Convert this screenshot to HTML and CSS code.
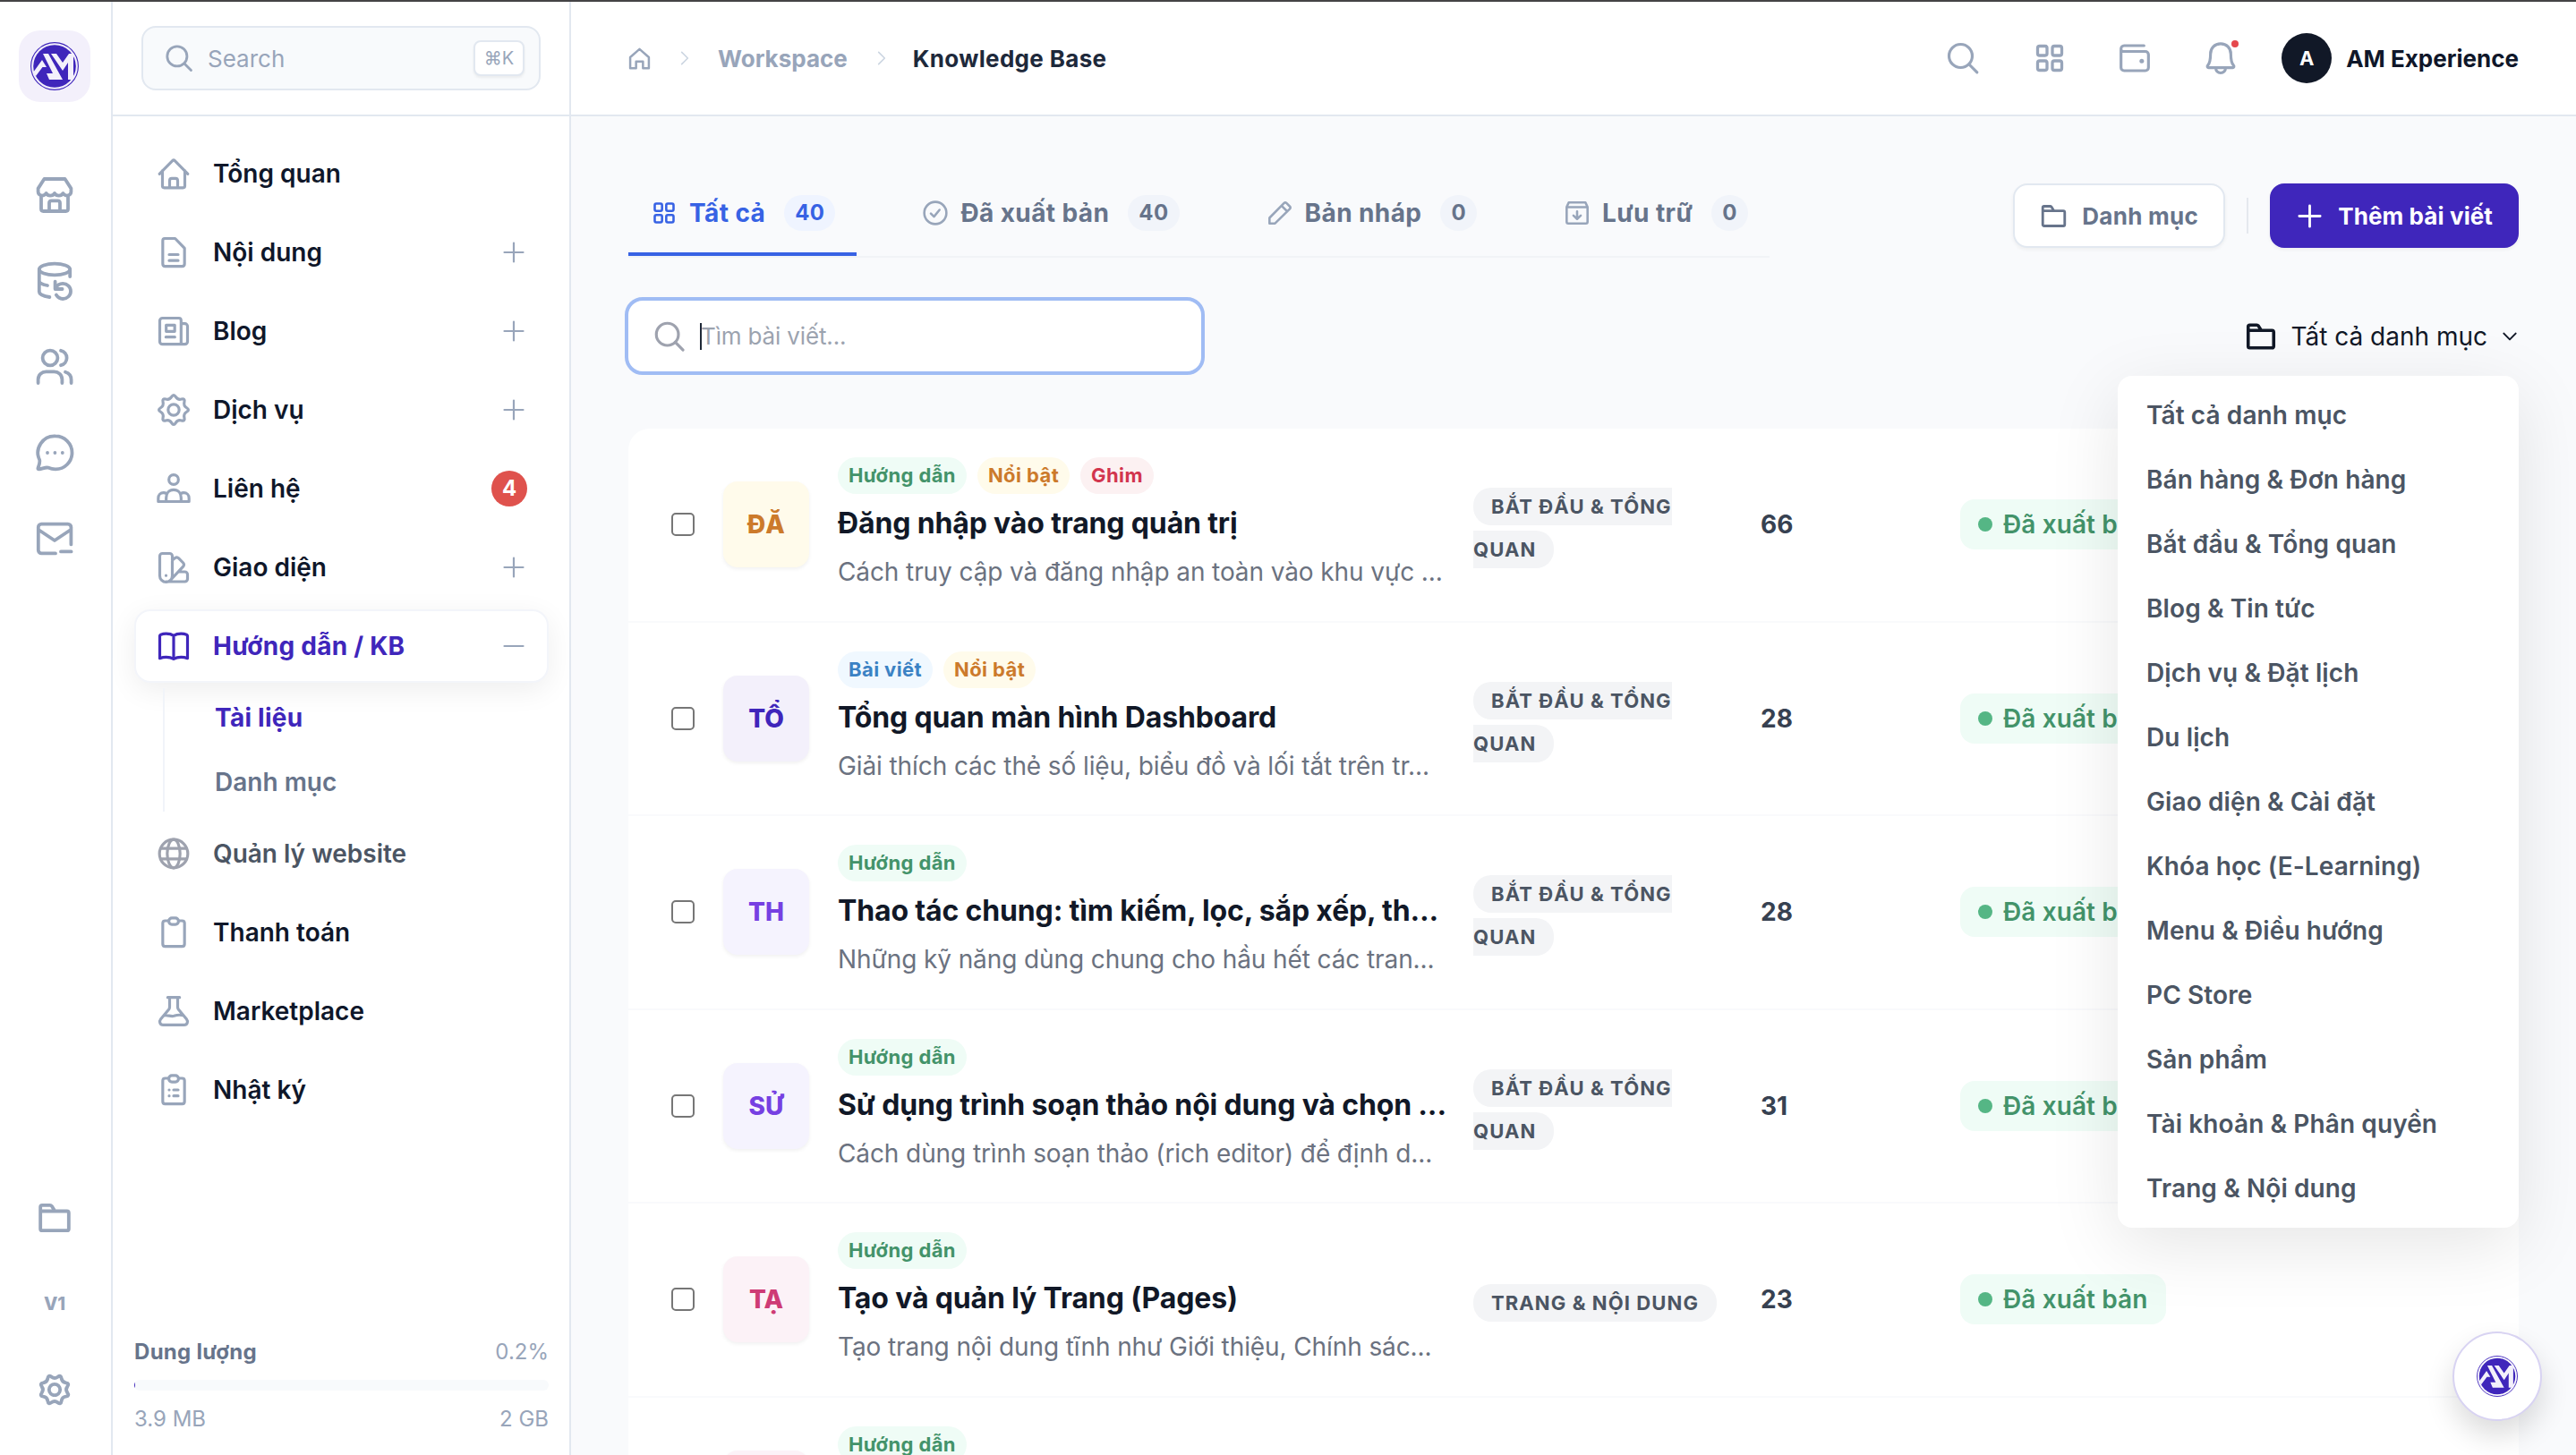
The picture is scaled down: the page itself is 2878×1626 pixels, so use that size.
FILE: index.html
```html
<!DOCTYPE html>
<html lang="vi">
<head>
    <meta charset="UTF-8">
    <meta name="viewport" content="width=device-width, initial-scale=1.0">
    <title>Knowledge Base</title>
    <link rel="stylesheet" href="styles.css">
</head>
<body>
    <!-- Shared icons -->
    <svg class="sprite" width="0" height="0">
        <symbol id="search" viewBox="0 0 24 24"><circle cx="10.5" cy="10.5" r="7.8"/><path d="M16.2 16.2 21.5 21.5"/></symbol>
        <symbol id="plus" viewBox="0 0 24 24"><path d="M12 3v18M3 12h18"/></symbol>
        <symbol id="minus" viewBox="0 0 24 24"><path d="M3 12h18"/></symbol>
        <symbol id="chevron" viewBox="0 0 24 24"><path d="M8 4l8 8-8 8"/></symbol>
        <symbol id="folder" viewBox="0 0 24 24"><path d="M2.5 8V4.7C2.5 4 3 3.5 3.7 3.5h5.2c.5 0 .9.2 1.2.6L12.2 7.5h8.1c.7 0 1.2.5 1.2 1.2v10.6c0 .7-.5 1.2-1.2 1.2H3.7c-.7 0-1.2-.5-1.2-1.2zM2.5 7.5h9.7"/></symbol>
        <symbol id="grid" viewBox="0 0 24 24"><rect x="3" y="3" width="7" height="7" rx="1.5"/><rect x="14" y="3" width="7" height="7" rx="1.5"/><rect x="3" y="14" width="7" height="7" rx="1.5"/><rect x="14" y="14" width="7" height="7" rx="1.5"/></symbol>
        <symbol id="gear" viewBox="0 0 24 24"><path d="M20.75 10.65Q23 12 20.75 13.35Q18.5 14.7 19.15 17.25Q19.8 19.8 17.25 19.15Q14.7 18.5 13.35 20.75Q12 23 10.65 20.75Q9.3 18.5 6.75 19.15Q4.2 19.8 4.85 17.25Q5.5 14.7 3.25 13.35Q1 12 3.25 10.65Q5.5 9.3 4.85 6.75Q4.2 4.2 6.75 4.85Q9.3 5.5 10.65 3.25Q12 1 13.35 3.25Q14.7 5.5 17.25 4.85Q19.8 4.2 19.15 6.75Q18.5 9.3 20.75 10.65Z"/><circle cx="12" cy="12" r="3.7"/></symbol>
        <symbol id="logo" viewBox="0 0 54 54">
            <circle cx="27" cy="27" r="26.4" fill="none" stroke="#3f26bb" stroke-width="1.1"/>
            <circle cx="27" cy="27" r="23.8" fill="#3f26bb"/>
            <path fill="#f3f0fb" d="M3 34 13 20 18 28H13.500L6 38ZM14 13H20L36 42H21L18 35H25ZM23 13H29L36 23 43 13H48V42H42V23L36 32Z"/>
        </symbol>
    </svg>

    <div class="topline"></div>
    <div class="app">
        <aside class="rail">
            <div class="rail-logo"><svg><use href="#logo"/></svg></div>
            <div class="rail-icons">
                <svg class="icon" viewBox="0 0 24 24"><path d="M6.200 3h11.600L21.200 8.300v2c0 1.100-1 2-2.200 2-1 0-1.900-.7-2.300-1.300-.4.700-1.200 1.300-2.300 1.300s-2-.6-2.400-1.300c-.4.700-1.300 1.300-2.400 1.300S7.700 11.700 7.300 11c-.4.600-1.300 1.300-2.300 1.300-1.200 0-2.200-.9-2.200-2v-2zM4.500 12.500v7.300c0 .8.500 1.200 1.200 1.200h12.600c.7 0 1.200-.4 1.200-1.200v-7.300M9 21v-4.500c0-.8.500-1.300 1.200-1.300h3.600c.7 0 1.200.5 1.200 1.300V21"/></svg>
                <svg class="icon" viewBox="0 0 24 24"><ellipse cx="12" cy="5.500" rx="8.600" ry="3.200"/><path d="M3.400 5.500V18c0 1.400 2.500 2.500 5.800 3M3.400 12c0 1.100 2 2 4.600 2.500M20.600 5.500v4M12.300 12.300v4.200h4M12.600 16c.8-1.600 2.200-2.600 4-2.600 2.400 0 4.400 1.900 4.400 4.300s-2 4.300-4.400 4.300c-1.500 0-2.900-.9-3.700-2.200"/></svg>
                <svg class="icon" viewBox="0 0 24 24"><circle cx="9.500" cy="7" r="4.200"/><path d="M15.500 2.900a4.200 4.200 0 0 1 0 8.200M2.800 21v-2c0-2.500 2-4.300 4.400-4.300h4.600c2.400 0 4.400 1.800 4.400 4.300v2M18 14.900c2 .6 3.300 2.200 3.300 4.300V21"/></svg>
                <svg class="icon" viewBox="0 0 24 24"><path d="M12.500 2.700a9.200 9.200 0 1 1 0 18.500c-1.600 0-2.800-.3-4.200-.9-1.500-.3-3.200.7-5 .9-.6 0-.7-.4-.5-.9.500-1.200 1.100-2.800.8-4.300A9.300 9.300 0 0 1 12.500 2.700z"/><path d="M8 12h.01M12.200 12h.01M16.400 12h.01"/></svg>
                <svg class="icon" viewBox="0 0 24 24"><path d="M12.500 20.200H4.700c-1 0-1.800-.8-1.800-1.800V5.600c0-1 .8-1.800 1.800-1.800h14.700c1 0 1.800.8 1.800 1.800v9.600M3 7l9 6 9-6M15.500 19.200h5.800"/></svg>
            </div>
            <div class="rail-bottom">
                <svg class="icon" viewBox="0 0 24 24"><use href="#folder"/></svg>
                <span class="version">V1</span>
                <svg class="icon turned" viewBox="0 0 24 24"><use href="#gear"/></svg>
            </div>
        </aside>

        <aside class="sidebar">
            <div class="sidebar-head">
                <div class="quick-search">
                    <svg class="icon"><use href="#search"/></svg>
                    <span>Search</span>
                    <kbd>⌘K</kbd>
                </div>
            </div>
            <nav class="nav">
                <a class="nav-item">
                    <svg class="icon" viewBox="0 0 24 24"><path d="M2.500 12.200 11.200 3.400c.5-.5 1.100-.5 1.600 0l8.700 8.800M4.500 10v10.300c0 .7.500 1.200 1.200 1.200h12.600c.7 0 1.200-.5 1.200-1.200V10M9.300 21.300v-4.500c0-1 .6-1.600 1.400-1.600h2.600c.8 0 1.400.6 1.400 1.600v4.500"/></svg>
                    Tổng quan
                </a>
                <a class="nav-item">
                    <svg class="icon" viewBox="0 0 24 24"><path d="M6 2.700h7l6.300 6.500v10.500c0 1-.7 1.700-1.600 1.700H6.300c-.9 0-1.600-.7-1.600-1.700V4.200c0-.9.500-1.500 1.300-1.500zM9 13.500h6M9 17.500h6"/></svg>
                    Nội dung<svg class="icon more"><use href="#plus"/></svg>
                </a>
                <a class="nav-item">
                    <svg class="icon" viewBox="0 0 24 24"><path d="M17 20.800H4.500c-1 0-1.800-.8-1.800-1.800V5c0-1 .8-1.700 1.800-1.700h11c.9 0 1.500.7 1.500 1.600zM17 7h2.500c1 0 1.800.8 1.800 1.700V19c0 1-.8 1.800-1.800 1.800H17M7 8h5.700v4.200H7zM6.800 16h6"/></svg>
                    Blog<svg class="icon more"><use href="#plus"/></svg>
                </a>
                <a class="nav-item">
                    <svg class="icon" viewBox="0 0 24 24"><use href="#gear"/></svg>
                    Dịch vụ<svg class="icon more"><use href="#plus"/></svg>
                </a>
                <a class="nav-item">
                    <svg class="icon" viewBox="0 0 24 24"><circle cx="12" cy="6" r="3.200"/><path d="M7 20.700v-2.500c0-3.300 2-5.400 5-5.400s5 2.100 5 5.400v2.500M7.200 15.400C6.700 15 6 14.800 5.200 14.800c-2 0-3.500 1.400-3.500 3.600v2.300h20.600v-2.300c0-2.200-1.500-3.600-3.500-3.600-.8 0-1.500.2-2 .6"/></svg>
                    Liên hệ<span class="nav-count">4</span>
                </a>
                <a class="nav-item">
                    <svg class="icon" viewBox="0 0 24 24"><path d="M4.500 2.700h4.800c1 0 1.800.8 1.800 1.800v13.200a4.200 4.200 0 0 1-8.400 0V4.500c0-1 .8-1.800 1.800-1.800zM11.100 7.200l1.900-1.500c.8-.6 1.700-.5 2.400.2l3 3.100c.6.7.6 1.600.1 2.300L9.500 21M15.800 15h3.700c1 0 1.800.8 1.800 1.800v3c0 1-.8 1.800-1.800 1.800H7M6.900 17.500h.01"/></svg>
                    Giao diện<svg class="icon more"><use href="#plus"/></svg>
                </a>
                <a class="nav-item active">
                    <svg class="icon" viewBox="0 0 24 24"><path d="M12 5c-1.500-1-3.200-1.300-5-1.300-1.400 0-2.600.2-3.600.6-.4.200-.7.600-.7 1v14.900c1.300-.5 2.800-.8 4.300-.8 1.800 0 3.600.4 5 1.300 1.400-.9 3.200-1.300 5-1.300 1.500 0 3 .3 4.300.8V5.300c0-.4-.3-.8-.7-1-1-.4-2.200-.6-3.600-.6-1.800 0-3.500.3-5 1.300zM12 5v15.700"/></svg>
                    Hướng dẫn / KB<svg class="icon more"><use href="#minus"/></svg>
                </a>
                <div class="subnav">
                    <a class="current">Tài liệu</a>
                    <a>Danh mục</a>
                </div>
                <a class="nav-item muted">
                    <svg class="icon" viewBox="0 0 24 24"><circle cx="12" cy="12" r="9.500"/><ellipse cx="12" cy="12" rx="4.300" ry="9.500"/><path d="M3.500 8.500h17M3.500 15.500h17"/></svg>
                    Quản lý website
                </a>
                <a class="nav-item">
                    <svg class="icon" viewBox="0 0 24 24"><path d="M8.700 4.200H6.300c-.9 0-1.600.7-1.600 1.600v14c0 .9.700 1.600 1.600 1.600h11.400c.9 0 1.600-.7 1.600-1.600v-14c0-.9-.7-1.600-1.600-1.600h-2.400"/><rect x="8.800" y="2.300" width="6.400" height="4.400" rx="2"/></svg>
                    Thanh toán
                </a>
                <a class="nav-item">
                    <svg class="icon" viewBox="0 0 24 24"><path d="M8 2.800h8M9.300 2.800v6.500c0 .6-.2 1.100-.5 1.500l-5.400 6.500c-1.400 1.700-.5 3.900 1.500 3.900h14.200c2 0 2.900-2.200 1.500-3.900l-5.400-6.500c-.3-.4-.5-.9-.5-1.500V2.800M5.500 15c2.300-.6 4.500.8 6.800.2 2-.7 4-.9 6-.3"/></svg>
                    Marketplace
                </a>
                <a class="nav-item">
                    <svg class="icon" viewBox="0 0 24 24"><path d="M8.700 4.200H6.300c-.9 0-1.600.7-1.600 1.600v14c0 .9.700 1.600 1.600 1.600h11.400c.9 0 1.600-.7 1.600-1.600v-14c0-.9-.7-1.600-1.600-1.600h-2.400M12 12h3M12 16h3M9 12h.01M9 16h.01"/><rect x="8.800" y="2.300" width="6.400" height="4.400" rx="2"/></svg>
                    Nhật ký
                </a>
            </nav>
            <div class="storage">
                <div class="storage-row"><b>Dung lượng</b><span>0.2%</span></div>
                <div class="storage-bar"><div class="storage-used" style="width: 0.2%"></div></div>
                <div class="storage-row"><span>3.9 MB</span><span>2 GB</span></div>
            </div>
        </aside>

        <main class="main">
            <header class="header">
                <div class="breadcrumb">
                    <svg class="icon crumb-home" viewBox="0 0 24 24"><path d="M2 10.500 12 1.800l10 8.700v11.700h-6.300v-7H8.300v7H2z"/></svg>
                    <svg class="icon crumb-sep"><use href="#chevron"/></svg>
                    <span class="crumb">Workspace</span>
                    <svg class="icon crumb-sep"><use href="#chevron"/></svg>
                    <span class="crumb crumb-current">Knowledge Base</span>
                </div>
                <div class="header-actions">
                    <svg class="icon wide"><use href="#search"/></svg>
                    <svg class="icon small"><use href="#grid"/></svg>
                    <svg class="icon" viewBox="0 0 24 24"><path d="M2.800 6.500v11.800c0 1.200.9 2.100 2.100 2.100h14.200c1.200 0 2.100-.9 2.100-2.100V9.600c0-1.200-.9-2.100-2.100-2.100H4.300c-.9 0-1.500-.7-1.500-1.700 0-1.300.9-2.200 2.100-2.200h13.300"/><path d="M16.700 14v.01" stroke-width="3"/></svg>
                    <div class="bell">
                        <svg class="icon" viewBox="0 0 24 24"><path d="M12 2.300c-4 0-6.800 3-6.800 6.800 0 3.800-.6 6.400-1.900 7.900-.5.600-.1 1.400.6 1.400h16.200c.7 0 1.100-.8.600-1.400-1.300-1.500-1.900-4.100-1.900-7.900 0-3.800-2.800-6.800-6.800-6.800zM8.700 18.500c0 1.900 1.400 3.400 3.300 3.400s3.300-1.500 3.300-3.400"/></svg>
                        <i class="dot"></i>
                    </div>
                    <span class="user-avatar">A</span>
                    <span class="user-name">AM Experience</span>
                </div>
            </header>

            <section class="content">
                <div class="toolbar">
                    <div class="tabs">
                        <a class="tab selected">
                            <svg class="icon"><use href="#grid"/></svg>Tất cả<span class="count">40</span>
                        </a>
                        <a class="tab">
                            <svg class="icon" viewBox="0 0 24 24"><circle cx="12" cy="12" r="10.600"/><path d="M7.700 12.500l3 3L16 9"/></svg>Đã xuất bản<span class="count">40</span>
                        </a>
                        <a class="tab">
                            <svg class="icon" viewBox="0 0 24 24"><path d="M2 22v-5.300L16 2.500c.7-.7 1.500-.7 2.200 0l3.300 3.300c.7.700.7 1.500 0 2.200L7.300 22zM13.500 5l5.500 5.500"/></svg>Bản nháp<span class="count">0</span>
                        </a>
                        <a class="tab">
                            <svg class="icon" viewBox="0 0 24 24"><path d="M2 6.200 4 2h16l2 4.200V20.500c0 .9-.6 1.500-1.500 1.500h-17c-.9 0-1.500-.6-1.500-1.500zM2 6.500h20M12 10.500v7M8.500 14.500l3.500 3.300 3.500-3.300"/></svg>Lưu trữ<span class="count">0</span>
                        </a>
                    </div>
                    <div class="buttons">
                        <button class="btn btn-light"><svg class="icon"><use href="#folder"/></svg>Danh mục</button>
                        <span class="divider"></span>
                        <button class="btn btn-primary"><svg class="icon"><use href="#plus"/></svg>Thêm bài viết</button>
                    </div>
                </div>

                <div class="filters">
                    <div class="search-box">
                        <svg class="icon"><use href="#search"/></svg>
                        <span class="caret"></span>
                        <span class="placeholder">Tìm bài viết...</span>
                    </div>
                    <div class="category-filter">
                        <svg class="icon"><use href="#folder"/></svg>
                        <span>Tất cả danh mục</span>
                        <svg class="icon arrow"><use href="#chevron"/></svg>
                        <ul class="menu">
                            <li>Tất cả danh mục</li>
                            <li>Bán hàng &amp; Đơn hàng</li>
                            <li>Bắt đầu &amp; Tổng quan</li>
                            <li>Blog &amp; Tin tức</li>
                            <li>Dịch vụ &amp; Đặt lịch</li>
                            <li>Du lịch</li>
                            <li>Giao diện &amp; Cài đặt</li>
                            <li>Khóa học (E-Learning)</li>
                            <li>Menu &amp; Điều hướng</li>
                            <li>PC Store</li>
                            <li>Sản phẩm</li>
                            <li>Tài khoản &amp; Phân quyền</li>
                            <li>Trang &amp; Nội dung</li>
                        </ul>
                    </div>
                </div>

                <div class="list">
                    <div class="row">
                        <span class="check"></span>
                        <span class="thumb amber">ĐĂ</span>
                        <div class="article">
                            <div class="tags"><span class="tag green">Hướng dẫn</span><span class="tag amber">Nổi bật</span><span class="tag red">Ghim</span></div>
                            <h3>Đăng nhập vào trang quản trị</h3>
                            <p>Cách truy cập và đăng nhập an toàn vào khu vực ...</p>
                        </div>
                        <div class="category"><span>BẮT ĐẦU &amp; TỔNG QUAN</span></div>
                        <span class="views">66</span>
                        <span class="status">Đã xuất bản</span>
                    </div>
                    <div class="row">
                        <span class="check"></span>
                        <span class="thumb indigo">TỔ</span>
                        <div class="article">
                            <div class="tags"><span class="tag blue">Bài viết</span><span class="tag amber">Nổi bật</span></div>
                            <h3>Tổng quan màn hình Dashboard</h3>
                            <p>Giải thích các thẻ số liệu, biểu đồ và lối tắt trên tr...</p>
                        </div>
                        <div class="category"><span>BẮT ĐẦU &amp; TỔNG QUAN</span></div>
                        <span class="views">28</span>
                        <span class="status">Đã xuất bản</span>
                    </div>
                    <div class="row">
                        <span class="check"></span>
                        <span class="thumb violet">TH</span>
                        <div class="article">
                            <div class="tags"><span class="tag green">Hướng dẫn</span></div>
                            <h3>Thao tác chung: tìm kiếm, lọc, sắp xếp, th...</h3>
                            <p>Những kỹ năng dùng chung cho hầu hết các tran...</p>
                        </div>
                        <div class="category"><span>BẮT ĐẦU &amp; TỔNG QUAN</span></div>
                        <span class="views">28</span>
                        <span class="status">Đã xuất bản</span>
                    </div>
                    <div class="row">
                        <span class="check"></span>
                        <span class="thumb violet">SỬ</span>
                        <div class="article">
                            <div class="tags"><span class="tag green">Hướng dẫn</span></div>
                            <h3>Sử dụng trình soạn thảo nội dung và chọn ...</h3>
                            <p>Cách dùng trình soạn thảo (rich editor) để định d...</p>
                        </div>
                        <div class="category"><span>BẮT ĐẦU &amp; TỔNG QUAN</span></div>
                        <span class="views">31</span>
                        <span class="status">Đã xuất bản</span>
                    </div>
                    <div class="row">
                        <span class="check"></span>
                        <span class="thumb pink">TẠ</span>
                        <div class="article">
                            <div class="tags"><span class="tag green">Hướng dẫn</span></div>
                            <h3>Tạo và quản lý Trang (Pages)</h3>
                            <p>Tạo trang nội dung tĩnh như Giới thiệu, Chính sác...</p>
                        </div>
                        <div class="category"><span>TRANG &amp; NỘI DUNG</span></div>
                        <span class="views">23</span>
                        <span class="status">Đã xuất bản</span>
                    </div>
                    <div class="row">
                        <span class="check"></span>
                        <span class="thumb pink"></span>
                        <div class="article">
                            <div class="tags"><span class="tag green">Hướng dẫn</span></div>
                        </div>
                    </div>
                </div>
            </section>
        </main>
    </div>
    <div class="fab"><svg><use href="#logo"/></svg></div>
</body>
</html>
```

FILE: styles.css
```css
* {
    box-sizing: border-box;
}
body {
    margin: 0;
    height: 1626px;
    overflow: hidden;
    font-family: Inter, "Liberation Sans", sans-serif;
    font-size: 28px;
    color: #0f172a;
    background-color: #f9fafc;
}
.sprite {
    position: absolute;
}
.icon {
    flex: none;
    width: 40px;
    height: 40px;
    fill: none;
    stroke: currentColor;
    stroke-width: 1.9;
    stroke-linecap: round;
    stroke-linejoin: round;
    color: #98a5ba;
}
.topline {
    height: 2px;
    background-color: #444345;
}
.app {
    display: flex;
    height: 1624px;
    overflow: hidden;
}

/* Icon rail */
.rail {
    display: flex;
    flex-direction: column;
    align-items: center;
    flex: none;
    width: 126px;
    padding: 32px 2px 53px 0;
    border-right: 2px solid #e2e8f0;
    background-color: #fff;
}
.rail-logo {
    display: flex;
    align-items: center;
    justify-content: center;
    width: 80px;
    height: 80px;
    border-radius: 24px;
    background-color: #f3f0fb;
}
.rail-logo svg {
    width: 54px;
    height: 54px;
}
.rail-icons {
    display: flex;
    flex-direction: column;
    gap: 48px;
    margin-top: 80px;
}
.rail-icons .icon {
    width: 48px;
    height: 48px;
}
.rail-bottom {
    display: flex;
    flex-direction: column;
    align-items: center;
    gap: 56px;
    margin-top: auto;
}
.rail-bottom .icon {
    stroke-width: 2.3;
}
.version {
    font-size: 20px;
    font-weight: 800;
    line-height: 40px;
    color: #98a5ba;
}
.turned {
    transform: rotate(22.5deg);
}

/* Sidebar */
.sidebar {
    display: flex;
    flex-direction: column;
    flex: none;
    width: 512px;
    border-right: 2px solid #e2e8f0;
    background-color: #fff;
}
.sidebar-head {
    height: 128px;
    padding: 27px 32px 0;
    border-bottom: 2px solid #e2e8f0;
}
.quick-search {
    display: flex;
    align-items: center;
    height: 72px;
    padding: 0 16px 0 23px;
    border: 2px solid #e2e8f0;
    border-radius: 16px;
    background-color: #f8fafc;
    font-size: 26px;
    color: #98a5ba;
}
.quick-search .icon {
    width: 34px;
    height: 34px;
    margin-right: 15px;
    stroke-width: 2;
}
kbd {
    width: 57px;
    height: 40px;
    margin-left: auto;
    border: 2px solid #e2e8f0;
    border-radius: 8px;
    background-color: #fff;
    box-shadow: 0 2px 3px rgba(0, 0, 0, 0.06);
    font-family: inherit;
    font-size: 20px;
    line-height: 36px;
    text-align: center;
}
.nav {
    display: flex;
    flex-direction: column;
    gap: 6px;
    padding: 23px 23px 0 24px;
}
.nav-item {
    display: flex;
    align-items: center;
    height: 82px;
    padding: 0 23px 0 22px;
    border: 2px solid transparent;
    border-radius: 18px;
    font-weight: 580;
}
.nav-item .icon {
    margin-right: 24px;
}
.nav-item .icon.more {
    width: 28px;
    height: 28px;
    margin: 0 0 0 auto;
}
.nav-count {
    width: 40px;
    height: 40px;
    margin: 0 -1px 0 auto;
    border-radius: 50%;
    background-color: #df524d;
    color: #fff;
    font-size: 24px;
    font-weight: 700;
    line-height: 40px;
    text-align: center;
}
.nav-item.active {
    border-color: #f3f5fa;
    box-shadow: 0 8px 32px rgba(0, 0, 0, 0.07);
    background-color: #fff;
    color: #3f26bb;
    font-weight: 700;
    letter-spacing: 0.25px;
}
.active .icon:first-child {
    color: #3f26bb;
}
.nav-item.muted {
    color: #4b5563;
}
.muted .icon {
    color: #9ea2ae;
}
.subnav {
    display: flex;
    flex-direction: column;
    gap: 4px;
    height: 138px;
    margin-left: 32px;
    padding-left: 56px;
    border-left: 2px solid #f1f4f9;
}
.subnav a {
    flex: none;
    height: 68px;
    line-height: 67px;
    font-weight: 580;
    color: #67748b;
}
.subnav a.current {
    color: #3f26bb;
    font-weight: 700;
    letter-spacing: 0.25px;
}
.storage {
    margin-top: auto;
    padding: 0 23px 20px 24px;
    font-size: 24px;
    color: #98a5ba;
}
.storage-row {
    display: flex;
    justify-content: space-between;
    line-height: 40px;
}
.storage-row b {
    font-weight: 700;
    letter-spacing: 0.3px;
    color: #67748b;
}
.storage-bar {
    height: 12px;
    margin: 11px 0 12px;
    border-radius: 6px;
    background-color: #f8fafc;
    overflow: hidden;
}
.storage-used {
    height: 6px;
    margin-top: 3px;
    background-color: #3f26bb;
}

/* Header */
.main {
    flex: 1;
    min-width: 0;
}
.header {
    display: flex;
    align-items: center;
    justify-content: space-between;
    height: 128px;
    padding: 0 64px;
    border-bottom: 2px solid #e2e8f0;
    background-color: #fff;
    font-size: 26px;
    font-weight: 600;
}
.breadcrumb {
    display: flex;
    align-items: center;
}
.crumb-home {
    width: 25px;
    height: 27px;
    stroke-width: 2.4;
}
.crumb-sep {
    width: 20px;
    height: 20px;
    margin: 0 27px 0 28px;
    color: #cbd5e1;
}
.crumb + .crumb-sep {
    margin-right: 25px;
}
.crumb {
    color: #98a5ba;
    font-weight: 650;
}
.crumb-current {
    color: #1e293b;
    font-weight: 700;
    letter-spacing: 0.33px;
}
.header-actions {
    display: flex;
    align-items: center;
}
.header-actions .icon {
    width: 40px;
    height: 40px;
    margin-right: 56px;
}
.header-actions .icon.wide {
    margin-right: 59px;
}
.header-actions .icon.small {
    width: 36px;
    height: 36px;
    margin-right: 57px;
    stroke-width: 2.2;
}
.bell {
    position: relative;
}
.header-actions .bell .icon {
    display: block;
    margin-right: 48px;
}
.dot {
    position: absolute;
    top: 0;
    left: 32px;
    width: 8px;
    height: 8px;
    border-radius: 50%;
    background-color: #e5484d;
}
.user-avatar {
    width: 56px;
    height: 56px;
    border-radius: 50%;
    background-color: #111827;
    color: #fff;
    font-size: 22px;
    font-weight: 700;
    line-height: 56px;
    text-align: center;
}
.user-name {
    margin-left: 16px;
    font-weight: 650;
}

/* Tabs and buttons */
.content {
    padding: 60px 64px 0;
}
.toolbar {
    display: flex;
    justify-content: space-between;
}
.tabs {
    display: flex;
    gap: 46px;
    height: 98px;
    border-bottom: 2px solid #f1f3f6;
}
.tab {
    display: flex;
    align-items: center;
    height: 96px;
    padding: 4px 24px 0 28px;
    border-bottom: 4px solid transparent;
    font-weight: 700;
    letter-spacing: 0.4px;
    color: #67748b;
}
.tab .icon {
    width: 28px;
    height: 28px;
    margin-right: 14px;
    stroke-width: 2.2;
}
.tab.selected {
    padding-left: 26px;
    border-color: #3762e4;
    color: #3762e4;
}
.selected .icon {
    color: #3762e4;
}
.count {
    min-width: 40px;
    margin-left: 21px;
    padding: 0 12px;
    border-radius: 20px;
    background-color: #f1f4fa;
    font-size: 24px;
    line-height: 40px;
    text-align: center;
}
.selected .count {
    background-color: #eff4ff;
}
.buttons {
    display: flex;
    align-items: center;
    height: 72px;
    margin-top: 15px;
}
.btn {
    display: flex;
    align-items: center;
    height: 72px;
    padding: 0 28px;
    border: 2px solid #e2e8f0;
    border-radius: 16px;
    background-color: #fff;
    box-shadow: 0 2px 4px rgba(0, 0, 0, 0.05);
    font-family: inherit;
    font-size: 26px;
    font-weight: 650;
    letter-spacing: 0.3px;
    color: #67748b;
}
.btn .icon {
    width: 31px;
    height: 31px;
    margin-right: 16px;
    stroke-width: 2.2;
    color: inherit;
}
.btn-primary {
    padding: 0 27px;
    border-color: #3f26bb;
    background-color: #3f26bb;
    color: #fff;
    font-weight: 700;
    letter-spacing: 0.1px;
}
.divider {
    width: 2px;
    height: 40px;
    margin: 0 24px;
    background-color: #e5e8ee;
}

/* Filters */
.filters {
    display: flex;
    align-items: center;
    justify-content: space-between;
    height: 87px;
    margin: 44px 0 60px -4px;
}
.search-box {
    display: flex;
    align-items: center;
    width: 648px;
    height: 87px;
    padding: 0 27px;
    border: 4px solid #a0bcf4;
    border-radius: 20px;
    background-color: #fff;
    font-size: 26px;
    letter-spacing: -0.15px;
    color: #9ca3af;
}
.search-box .icon {
    width: 38px;
    height: 38px;
    margin-right: 15px;
    stroke-width: 2;
    color: #9ea2ae;
}
.caret {
    width: 2px;
    height: 30px;
    margin-right: -1px;
    background-color: #1f2937;
}
.category-filter {
    position: relative;
    display: flex;
    align-items: center;
    color: #111827;
}
.category-filter .icon {
    width: 36px;
    height: 36px;
    margin-right: 15px;
    stroke-width: 2.4;
    color: inherit;
}
.category-filter .icon.arrow {
    width: 20px;
    height: 20px;
    margin: 0 0 0 15px;
    transform: rotate(90deg);
}
.menu {
    position: absolute;
    top: 62px;
    right: 0;
    z-index: 5;
    width: 448px;
    margin: 0;
    padding: 8px 0;
    border-radius: 16px;
    background-color: #fff;
    box-shadow: 0 20px 80px rgba(0, 0, 0, 0.1);
    list-style: none;
    font-weight: 580;
    letter-spacing: 0.1px;
    color: #4b5563;
}
.menu li {
    height: 72px;
    padding-left: 32px;
    line-height: 72px;
}

/* Article list */
.list {
    border-radius: 24px 24px 0 0;
    background-color: #fff;
}
.row {
    display: grid;
    grid-template-columns: 58px 128px 710px 321px 223px auto;
    align-items: center;
    justify-content: start;
    height: 216.5px;
    padding-left: 48px;
    border-bottom: 2px solid #f9fafc;
}
.check {
    width: 26px;
    height: 26px;
    border: 2px solid #767676;
    border-radius: 5px;
}
.thumb {
    width: 96px;
    height: 96px;
    border-radius: 16px;
    box-shadow: 0 2px 4px rgba(0, 0, 0, 0.06);
    font-weight: 800;
    line-height: 96px;
    text-align: center;
}
.article {
    align-self: start;
    padding-top: 32px;
    white-space: nowrap;
}
.tags {
    display: flex;
    gap: 12px;
}
.tag {
    padding: 0 12px;
    border-radius: 21px;
    font-size: 22px;
    font-weight: 700;
    line-height: 41px;
    letter-spacing: 0.4px;
}
.amber {
    background-color: #fffbeb;
    color: #cc7a2b;
}
.green {
    background-color: #effcf6;
    color: #43936a;
}
.red {
    background-color: #fcf1f2;
    color: #d2354e;
}
.blue {
    background-color: #f0f8ff;
    color: #3b82c4;
}
.indigo {
    background-color: #f3f0fb;
    color: #3f26bb;
}
.violet {
    background-color: #f5f3fe;
    color: #7640e2;
}
.pink {
    background-color: #fcf2f7;
    color: #ce3b75;
}
.article h3 {
    margin: 10px 0 11px;
    font-size: 32px;
    font-weight: 700;
    line-height: 46px;
    letter-spacing: -0.15px;
    color: #111827;
}
.article p {
    margin: 0;
    line-height: 40px;
    letter-spacing: -0.1px;
    color: #6b7280;
}
.category {
    padding: 8px 40px 0 0;
    font-size: 22px;
    font-weight: 650;
    line-height: 48px;
    letter-spacing: 1.1px;
    color: #4b5563;
}
.category span {
    padding: 8px 20px;
    border-radius: 20px;
    background-color: #f3f4f6;
}
.views {
    font-weight: 650;
    color: #374151;
}
.status {
    display: flex;
    align-items: center;
    height: 56px;
    padding: 0 20px;
    border-radius: 16px;
    background-color: #effcf6;
    font-weight: 580;
    letter-spacing: 0.1px;
    color: #43936a;
}
.status::before {
    content: "";
    width: 16px;
    height: 16px;
    margin-right: 12px;
    border-radius: 50%;
    background-color: #55b685;
}

/* Floating logo button */
.fab {
    position: absolute;
    right: 38px;
    bottom: 38px;
    z-index: 6;
    display: flex;
    align-items: center;
    justify-content: center;
    width: 100px;
    height: 100px;
    border: 2px solid #d8d3f2;
    border-radius: 50%;
    background-color: #fff;
    box-shadow: 0 16px 32px rgba(0, 0, 0, 0.14);
}
.fab svg {
    width: 46px;
    height: 46px;
}
```
